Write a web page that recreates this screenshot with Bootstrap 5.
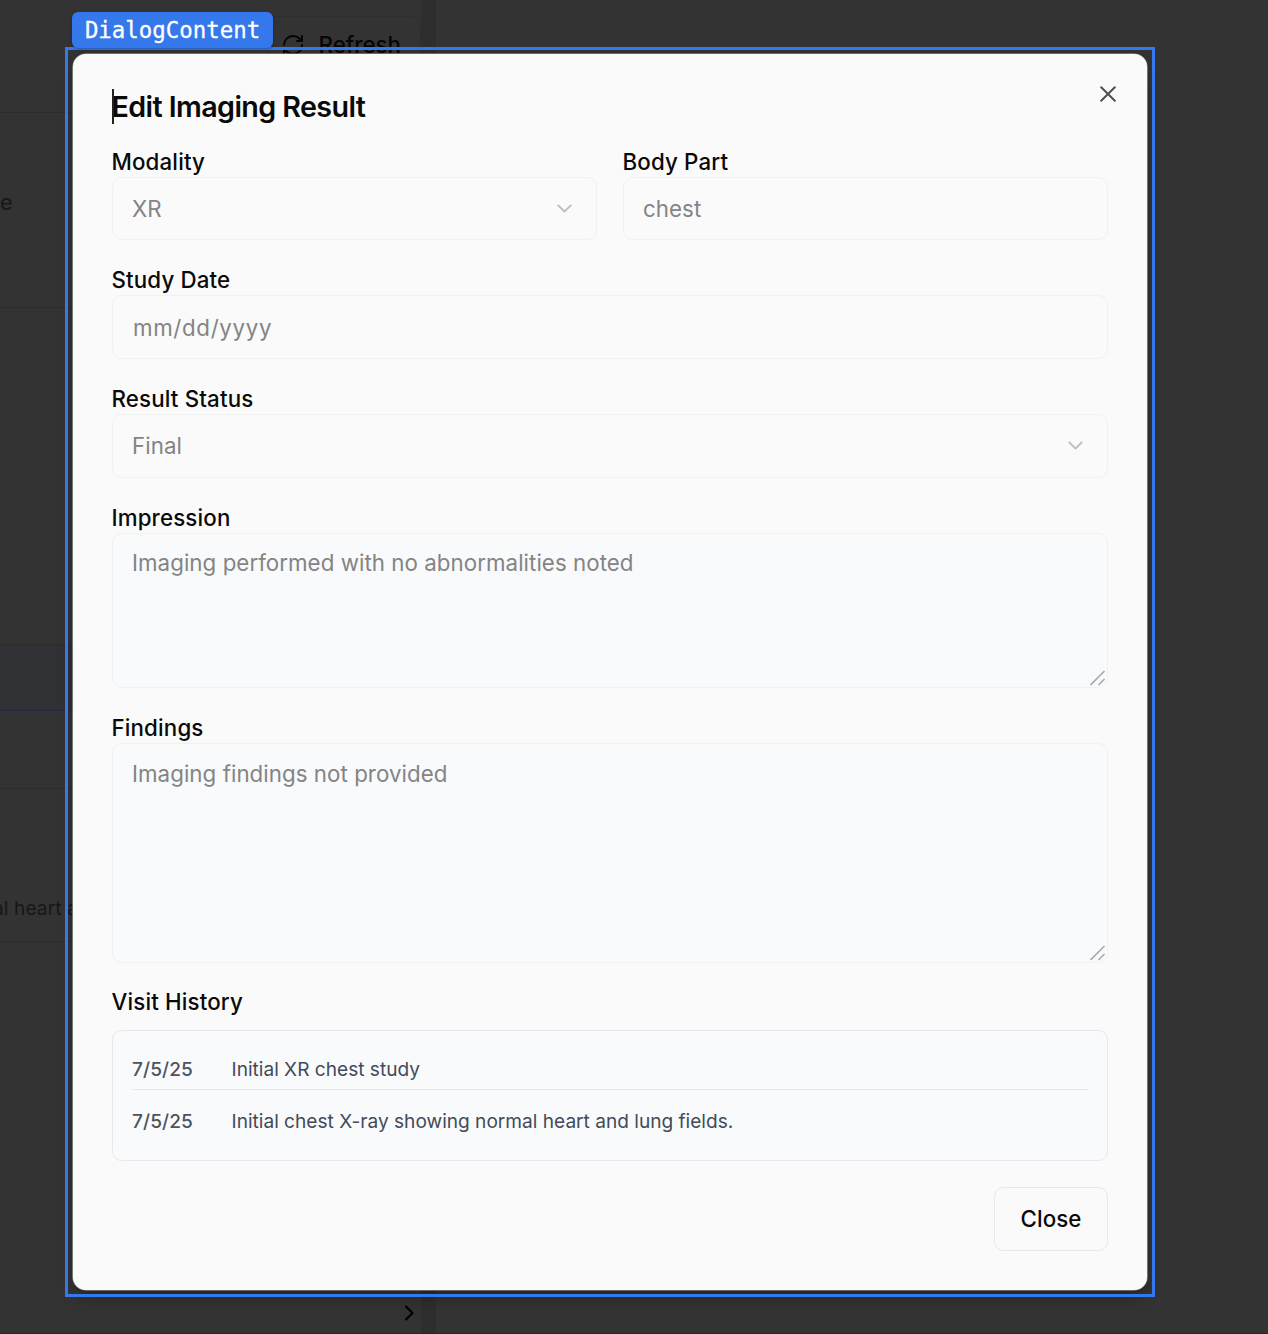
<!DOCTYPE html>
<html lang="en">
<head>
<meta charset="utf-8">
<meta name="viewport" content="width=device-width, initial-scale=1">
<title>Edit Imaging Result</title>
<link href="https://cdn.jsdelivr.net/npm/bootstrap@5.3.0/dist/css/bootstrap.min.css" rel="stylesheet">
<style>
  html, body { height: 1334px; }
  body { background: #333; font-family: Inter, "Liberation Sans", sans-serif; overflow: hidden; color: #0a0a0a; position: relative; }
  /* dimmed page behind the dialog */
  .page-back { height: 1334px; }
  .side-pane { width: 421px; color: #15171b; overflow: hidden; }
  .side-pane > div { flex: none; border-bottom: 1px solid #2d2d2d; }
  .gutter { width: 15px; background: #2e2e2e; }
  .pane-top { height: 113px; padding-top: 16px; }
  .refresh-btn { width: 161px; height: 58px; border: 1px solid #2f2f2f; border-left: 0; border-radius: 9px; font-size: 22.3px; font-weight: 500; letter-spacing: 0; color: #050505; padding-left: 21px; gap: 13.5px; }
  .pane-a { height: 195px; padding-top: 73px; font-size: 21.5px; }
  .pane-b { height: 337px; }
  .side-pane > .pane-sel { height: 66px; background: #2f3135; border-bottom-color: #1f2940; }
  .pane-c { height: 78px; }
  .pane-d { height: 153px; padding-top: 105px; font-size: 19.1px; white-space: nowrap; }
  .pane-d span { margin-left: -7px; letter-spacing: .1px; }
  .side-pane > .pane-foot { height: 392px; border-bottom: 0; padding: 0 4px 11px 0; }
  .page-edge { left: 0; right: 0; bottom: 0; height: 1px; background: #2b2427; }
  /* inspector overlay */
  .inspect-frame { left: 65px; top: 47px; width: 1090px; height: 1250px; border: 3px solid #3478ec; }
  .inspect-tag { left: 72px; top: 12px; width: 201px; height: 36px; border-radius: 6px; background: #3478ec; color: #fff; font: 22.4px/36px "DejaVu Sans Mono", monospace; text-align: center; box-shadow: 0 1px 3px rgba(0,0,0,.3); -webkit-text-stroke: .3px #fff; }
  /* dialog */
  .edit-dialog { left: 72.5px; top: 54px; width: 1074.5px; height: 1235.5px; padding: 37.5px 39px 39px 39px; background: #fafafa; border-radius: 13px; box-shadow: 0 0 0 .6px #a5a5a5, 0 12px 20px -4px rgba(0,0,0,.2), 0 4px 8px rgba(0,0,0,.12); }
  .dlg-title { font-size: 28.7px; line-height: 29px; font-weight: 600; letter-spacing: -.6px; margin: 0 0 28px; }
  .dlg-title::before { content: ""; position: absolute; left: 39px; top: 35px; width: 2px; height: 35px; background: #222; }
  .dlg-x { right: 31px; top: 31.5px; width: 16px; height: 16px; }
  .fields { gap: 26.7px; }
  .fields .form-label { display: block; font-size: 22.3px; line-height: 25px; font-weight: 500; letter-spacing: .15px; margin: 0; height: 28.2px; }
  .fields .form-control { height: 63.8px; border: 1px solid #f1f1f2; border-radius: 9.5px; background: #fafafa; padding: 0 19.5px; font-size: 22.3px; line-height: 33px; letter-spacing: .05px; color: #848484; }
  .fields .form-control.area { background: #f9fafc; padding-top: 12.5px; }
  .fields .form-control.area-sm { height: 155.5px; }
  .fields .form-control.area-lg { height: 219.5px; }
  .fields .date-hint { letter-spacing: .65px; padding-left: 1px; }
  .pair { gap: 25.5px; }
  .grip { right: 1px; bottom: 1px; }
  .history { height: 131px; margin-top: 12.5px; border: 1px solid #e6e8ec; border-radius: 9.5px; background: #f9fafc; padding: 13px 19.5px; font-size: 19.1px; line-height: 26px; letter-spacing: 0; color: #424a59; }
  .visit { height: 46px; padding-top: 12px; border-bottom: 1px solid #e6e8ec; }
  .visit + .visit { border: 0; margin-top: 6px; }
  .visit b { width: 99.5px; font-weight: 500; color: #4b5361; letter-spacing: .1px; }
  .dlg-close { width: 114px; height: 64px; margin-top: 26px; padding: 0; border: 1px solid #e8e8e8; border-radius: 9.5px; font-size: 22.3px; font-weight: 500; letter-spacing: .05px; color: #0a0a0a; }
</style>
</head>
<body>
<div class="page-back d-flex" aria-hidden="true">
  <div class="side-pane d-flex flex-column">
    <div class="pane-top d-flex justify-content-end">
      <div class="refresh-btn d-flex align-items-center">
        <svg width="24" height="24" viewBox="0 0 24 24" fill="none" stroke="currentColor" stroke-width="2" stroke-linecap="round" stroke-linejoin="round"><path d="M3 12a9 9 0 0 1 9-9 9.75 9.75 0 0 1 6.74 2.74L21 8M21 3v5h-5M21 12a9 9 0 0 1-9 9 9.75 9.75 0 0 1-6.74-2.74L3 16M8 16H3v5"/></svg>
        <span>Refresh</span>
      </div>
    </div>
    <div class="pane-a"><span>e</span></div>
    <div class="pane-b"></div>
    <div class="pane-sel"></div>
    <div class="pane-c"></div>
    <div class="pane-d"><span>al heart a</span></div>
    <div class="pane-foot d-flex justify-content-end align-items-end">
      <svg width="16" height="20" viewBox="0 0 16 20" fill="none" stroke="#000" stroke-width="2.2" stroke-linecap="round" stroke-linejoin="round"><path d="M5 3.5 11.5 10 5 16.5"/></svg>
    </div>
  </div>
  <div class="gutter"></div>
</div>
<div class="page-edge position-absolute"></div>

<div class="edit-dialog position-absolute" role="dialog" aria-labelledby="dlgTitle">
  <h2 class="dlg-title" id="dlgTitle">Edit Imaging Result</h2>
  <svg class="dlg-x position-absolute" viewBox="0 0 16 16" fill="none" stroke="#4f4f4f" stroke-width="2" stroke-linecap="round"><path d="m1.2 1.2 13.6 13.6M14.8 1.2 1.2 14.8"/></svg>
  <div class="fields d-flex flex-column">
    <div class="pair d-flex">
      <div class="flex-fill w-50">
        <span class="form-label">Modality</span>
        <div class="form-control d-flex align-items-center justify-content-between"><span>XR</span>
          <svg width="25" height="25" viewBox="0 0 24 24" fill="none" stroke="#bdbdbd" stroke-width="1.8" stroke-linecap="round" stroke-linejoin="round"><path d="m6 9 6 6 6-6"/></svg></div>
      </div>
      <div class="flex-fill w-50">
        <span class="form-label">Body Part</span>
        <div class="form-control d-flex align-items-center"><span>chest</span></div>
      </div>
    </div>
    <div>
      <span class="form-label">Study Date</span>
      <div class="form-control d-flex align-items-center"><span class="date-hint">mm/dd/yyyy</span></div>
    </div>
    <div>
      <span class="form-label">Result Status</span>
      <div class="form-control d-flex align-items-center justify-content-between"><span>Final</span>
        <svg width="25" height="25" viewBox="0 0 24 24" fill="none" stroke="#bdbdbd" stroke-width="1.8" stroke-linecap="round" stroke-linejoin="round"><path d="m6 9 6 6 6-6"/></svg></div>
    </div>
    <div>
      <span class="form-label">Impression</span>
      <div class="form-control area area-sm position-relative"><span>Imaging performed with no abnormalities noted</span>
        <svg class="grip position-absolute" width="16" height="16" fill="none" stroke="#a9a9ab" stroke-width="1.6"><path d="M.5 15 14.5 1M8.5 15l6-6"/></svg></div>
    </div>
    <div>
      <span class="form-label">Findings</span>
      <div class="form-control area area-lg position-relative"><span>Imaging findings not provided</span>
        <svg class="grip position-absolute" width="16" height="16" fill="none" stroke="#a9a9ab" stroke-width="1.6"><path d="M.5 15 14.5 1M8.5 15l6-6"/></svg></div>
    </div>
    <div>
      <span class="form-label">Visit History</span>
      <div class="history">
        <div class="visit d-flex"><b>7/5/25</b><span>Initial XR chest study</span></div>
        <div class="visit d-flex"><b>7/5/25</b><span>Initial chest X-ray showing normal heart and lung fields.</span></div>
      </div>
    </div>
  </div>
  <div class="d-flex justify-content-end"><button type="button" class="btn dlg-close">Close</button></div>
</div>

<div class="inspect-frame position-absolute pe-none"></div>
<div class="inspect-tag position-absolute"><span>DialogContent</span></div>
<script src="https://cdn.jsdelivr.net/npm/bootstrap@5.3.0/dist/js/bootstrap.bundle.min.js"></script>
</body>
</html>
